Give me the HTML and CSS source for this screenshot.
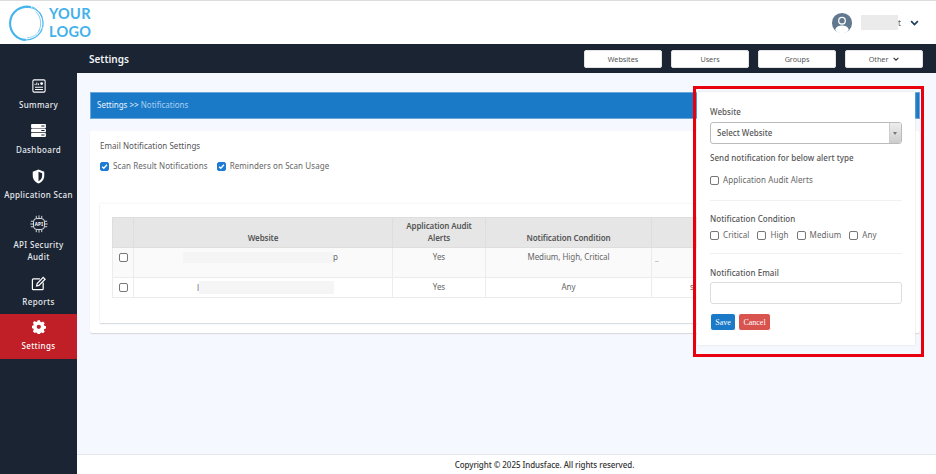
FILE: index.html
```html
<!DOCTYPE html>
<html lang="en">
<head>
<meta charset="utf-8">
<title>Settings - Notifications</title>
<link rel="stylesheet" href="styles.css">
</head>
<body>
<div class="app">
  <header class="topbar">
    <div class="logo">
      <svg class="logo-mark" viewBox="0 0 40 40" width="38" height="38" fill="none" stroke="#45b4ee">
        <path d="M24 3.100C14 .8 2.500 8 2.200 20c-.2 10 7.500 17.500 16.500 17.800" stroke-width="2.200"/>
        <path d="M12 5.500C20 1.500 32 3.500 36 14" stroke-width="1"/>
        <path d="M25 2.800C33 6 38.500 15 36.500 25" stroke-width="1"/>
        <path d="M29 8C35 13 36 23 32 29" stroke-width=".7"/>
        <path d="M33 8C37 14 38 22 35 28" stroke-width=".6"/>
        <path d="M17 37.800C25 38.500 33 34 36 26" stroke-width="1.200"/>
        <path d="M20 35.500C26 35.500 31 32 33.500 27" stroke-width=".6"/>
      </svg>
      <div class="logo-text">YOUR<br>LOGO</div>
    </div>
    <div class="user">
      <svg class="avatar" viewBox="0 0 24 24" width="22" height="22">
        <circle cx="12" cy="12" r="11" fill="#62788f"/>
        <circle cx="12" cy="9.500" r="4.300" fill="#fff"/>
        <circle cx="12" cy="9.500" r="2.900" fill="#62788f"/>
        <path d="M4.500 19.500C6 15.500 9 14.800 12 14.800S18 15.500 19.500 19.500C17.500 21.800 15 23 12 23S6.500 21.800 4.500 19.500Z" fill="#fff"/>
      </svg>
      <span class="user-name"><span class="user-blur"></span>t</span>
      <svg class="chev" viewBox="0 0 12 8" width="9" height="6"><path d="M1.500 1.500 6 6l4.500-4.500" fill="none" stroke="#1d3a57" stroke-width="2.200"/></svg>
    </div>
  </header>

  <aside class="sidebar">
    <a class="nav-item nav-summary">
      <svg viewBox="0 0 16 16" width="14" height="14" fill="none" stroke="#fff"><rect x="1" y="1" width="14" height="14" rx="1.500" stroke-width="1.200"/><path d="M3.500 7V5.500M5.500 7V4M7.500 7V5" stroke-width="1.100"/><circle cx="11" cy="5.200" r="1.600" fill="#fff" stroke="none"/><path d="M3.500 9.500h9M3.500 12h9" stroke-width="1.200"/></svg>
      <span>Summary</span>
    </a>
    <a class="nav-item nav-dash">
      <svg viewBox="0 0 16 14" width="15" height="13" fill="#fff"><path d="M1 0h14a1 1 0 0 1 1 1v2.500a1 1 0 0 1-1 1H1a1 1 0 0 1-1-1V1a1 1 0 0 1 1-1Zm0 5h14a1 1 0 0 1 1 1v2a1 1 0 0 1-1 1H1a1 1 0 0 1-1-1V6a1 1 0 0 1 1-1Zm0 4.700h14a1 1 0 0 1 1 1V13a1 1 0 0 1-1 1H1a1 1 0 0 1-1-1v-2.300a1 1 0 0 1 1-1Z"/><path d="M11 1.700h3.500v1H11ZM11 6.500h3.500v1H11ZM11 11.300h3.500v1H11Z" fill="#1a2433"/></svg>
      <span>Dashboard</span>
    </a>
    <a class="nav-item">
      <svg viewBox="0 0 14 16" width="13" height="15"><path d="M7 .5 13.200 3v4.200c0 4-2.600 7-6.200 8.300C3.400 14.200.8 11.200.8 7.200V3Z" fill="#fff"/><path d="M7 3v10c2.300-1.100 3.900-3.200 3.900-5.900V4.600Z" fill="#1a2433"/></svg>
      <span>Application Scan</span>
    </a>
    <a class="nav-item nav-api">
      <svg viewBox="0 0 22 22" width="20" height="20" fill="none" stroke="#fff" stroke-width=".9"><rect x="5" y="5" width="12" height="12" rx="3.500"/><path d="M8 5V2M11 5V1.500M14 5V2M8 17v3M11 17v3.500M14 17v3M5 8H2M5 11H1.500M5 14H2M17 8h3M17 11h3.500M17 14h3"/><text x="11" y="12.800" text-anchor="middle" class="api-text">API</text></svg>
      <span>API Security<br>Audit</span>
    </a>
    <a class="nav-item nav-reports">
      <svg viewBox="0 0 16 16" width="15" height="15" fill="none" stroke="#fff" stroke-width="1.300"><path d="M9.500 3H2.500A1 1 0 0 0 1.500 4v9.500a1 1 0 0 0 1 1H12a1 1 0 0 0 1-1V7"/><path d="M6 10.500 6.600 8 13 1.500l2 2L8.500 10Z"/></svg>
      <span>Reports</span>
    </a>
    <a class="nav-item nav-active">
      <svg viewBox="0 0 16 16" width="14" height="14"><path fill="#fff" fill-rule="evenodd" d="M6.600.5h2.800l.4 2 1.400.6 1.800-1.100 2 2-1.100 1.800.6 1.400 2 .4v2.800l-2 .4-.6 1.400 1.100 1.800-2 2-1.800-1.100-1.400.6-.4 2H6.600l-.4-2-1.400-.6L3 15.600l-2-2 1.100-1.800-.6-1.400-2-.4V7.200l2-.4.6-1.400L1 3.600l2-2 1.800 1.100 1.400-.6ZM8 5.800a2.500 2.500 0 1 0 0 5 2.500 2.500 0 0 0 0-5Z" transform="translate(0 -.3) scale(.97)"/></svg>
      <span>Settings</span>
    </a>
  </aside>

  <div class="subbar">
    <h1 class="page-title">Settings</h1>
    <div class="sub-actions">
      <button class="sub-btn">Websites</button>
      <button class="sub-btn">Users</button>
      <button class="sub-btn">Groups</button>
      <button class="sub-btn">Other <svg class="other-chev" viewBox="0 0 10 6" width="6" height="4"><path d="M1 1l4 4 4-4" fill="none" stroke="#333" stroke-width="1.800"/></svg></button>
    </div>
  </div>

  <main class="content">
    <div class="crumb">Settings &gt;&gt; <span class="crumb-current">Notifications</span></div>
    <section class="card">
      <div class="card-title">Email Notification Settings</div>
      <div class="opts">
        <label class="check"><input type="checkbox" class="cb cb-on" checked>Scan Result Notifications</label>
        <label class="check"><input type="checkbox" class="cb cb-on" checked>Reminders on Scan Usage</label>
      </div>
      <div class="inner">
        <table class="grid">
          <colgroup><col class="c1"><col class="c2"><col class="c3"><col class="c4"><col class="c5"></colgroup>
          <thead>
            <tr><th></th><th>Website</th><th>Application Audit Alerts</th><th>Notification Condition</th><th></th></tr>
          </thead>
          <tbody>
            <tr class="row-a">
              <td class="td-c"><input type="checkbox" class="cb"></td>
              <td><div class="site site-a"><span class="blur blur-a"></span>p</div></td>
              <td>Yes</td><td>Medium, High, Critical</td><td class="email-a">_</td>
            </tr>
            <tr class="row-b">
              <td class="td-c"><input type="checkbox" class="cb"></td>
              <td><div class="site site-b">l<span class="blur blur-b"></span></div></td>
              <td>Yes</td><td>Any</td><td class="email-b">s</td>
            </tr>
          </tbody>
        </table>
      </div>
    </section>
  </main>

  <footer class="footer">Copyright © 2025 Indusface. All rights reserved.</footer>

  <aside class="panel">
    <label class="fld-label">Website</label>
    <div class="select"><span>Select Website</span><span class="select-arrow"></span></div>
    <div class="fld-label fld-send">Send notification for below alert type</div>
    <label class="check check-audit"><input type="checkbox" class="cb">Application Audit Alerts</label>
    <hr class="sep">
    <div class="fld-label">Notification Condition</div>
    <div class="conds">
      <label class="check"><input type="checkbox" class="cb">Critical</label>
      <label class="check"><input type="checkbox" class="cb">High</label>
      <label class="check"><input type="checkbox" class="cb">Medium</label>
      <label class="check"><input type="checkbox" class="cb">Any</label>
    </div>
    <hr class="sep sep-2">
    <label class="fld-label">Notification Email</label>
    <input class="text-input" type="text">
    <div class="panel-actions">
      <button class="btn btn-save">Save</button>
      <button class="btn btn-cancel">Cancel</button>
    </div>
  </aside>
  <div class="highlight"></div>
</div>
</body>
</html>
```
FILE: styles.css
```css
* { box-sizing: border-box; }
html, body { margin: 0; height: 100%; overflow: hidden; }
body { font-family: "Noto Sans", "Open Sans", sans-serif; font-size: 8px; color: #555; background: #f5f8fe; }

.app {
  position: relative;
  width: 936px;
  height: 474px;
  display: grid;
  grid-template-columns: 77px minmax(0, 1fr);
  grid-template-rows: 44px 29px minmax(0, 1fr) 20px;
  overflow: hidden;
}

.topbar {
  grid-column: 1 / -1;
  display: flex;
  align-items: center;
  justify-content: space-between;
  background: #fff;
  border-top: 1px solid #dcdcdc;
  padding: 0 17px 0 8px;
}
.logo { display: flex; align-items: center; gap: 3px; }
.logo-mark { display: block; }
.logo-text { font-family: "Lato", sans-serif; font-size: 14.500px; font-weight: 700; line-height: 18px; letter-spacing: .3px; color: #43b1ea; }
.user { display: flex; align-items: center; }
.avatar { display: block; margin-right: 8px; }
.user-name { display: flex; align-items: center; width: 40px; font-size: 8px; color: #555; }
.user-blur { display: block; width: 38px; height: 15px; background: #ebebeb; }
.chev { display: block; margin-left: 9px; }

.sidebar {
  grid-column: 1;
  grid-row: 2 / 5;
  display: flex;
  flex-direction: column;
  background: #1a2433;
  padding-top: 35px;
  color: #eef0f3;
}
.nav-item {
  display: flex;
  flex-direction: column;
  align-items: center;
  flex: none;
  text-align: center;
  color: #e8eaee;
  font-size: 8px;
  font-weight: 500;
  letter-spacing: .35px;
  line-height: 12px;
  height: 45px;
  gap: 5px;
}
.nav-item svg { display: block; flex: none; }
.nav-summary { gap: 6px; }
.nav-dash { gap: 7px; }
.nav-api { height: 62px; }
.nav-reports { height: 38px; }
.nav-active { background: #c01f27; padding-top: 6px; color: #fff; gap: 6px; }

.subbar {
  grid-column: 2;
  grid-row: 2;
  display: flex;
  align-items: center;
  justify-content: space-between;
  background: #1a2433;
  padding: 0 13px 0 12px;
}
.page-title { margin: 0; font-size: 10px; font-weight: 600; color: #f1f3f5; }
.sub-actions { display: flex; gap: 9px; }
.sub-btn {
  width: 78px;
  height: 18px;
  padding: 0;
  border: 1px solid #e3e3e3;
  border-radius: 2px;
  background: #fff;
  color: #555;
  font: inherit;
  font-size: 7.200px;
}
.other-chev { margin-left: 3px; vertical-align: 1px; }

.content {
  grid-column: 2;
  grid-row: 3;
  padding: 19px 16px 0 13px;
  background: #f5f8fe;
  min-height: 0;
}
.crumb {
  height: 27px;
  background: #1a7ac8;
  border: 1px solid #6aa8dc;
  color: #eaf3fb;
  padding-left: 6px;
  line-height: 24px;
  font-size: 8px;
}
.crumb-current { color: #a9d0f0; }

.card {
  margin-top: 12px;
  height: 202px;
  background: #fff;
  border-radius: 2px;
  box-shadow: 0 1px 1px #d5d8dc;
  padding: 9px 10px 10px;
}
.card-title { font-size: 8px; letter-spacing: .05px; line-height: 12px; color: #555; }
.opts { display: flex; gap: 9px; margin-top: 8px; }
.check { display: inline-flex; align-items: center; gap: 4px; font-size: 8px; letter-spacing: .08px; line-height: 12px; color: #666; }
.cb {
  appearance: none;
  width: 9px;
  height: 9px;
  margin: 0;
  flex: none;
  border: 1px solid #777;
  border-radius: 2px;
  background: #fff;
}
.cb-on {
  border-color: #1d7bd6;
  background: #1d7bd6 url("data:image/svg+xml,%3Csvg xmlns='http://www.w3.org/2000/svg' viewBox='0 0 8 8'%3E%3Cpath d='M1.300 4.200 3.200 6 6.800 2' fill='none' stroke='%23fff' stroke-width='1.500'/%3E%3C/svg%3E") center / 100% no-repeat;
}

.inner {
  margin-top: 32px;
  height: 119px;
  background: #fff;
  box-shadow: 0 0 2px #e6e8eb, 0 1px 1px #d5d8dc;
  padding: 13px 12px 0;
}
.grid { width: 100%; table-layout: fixed; border-collapse: collapse; font-size: 8px; letter-spacing: -.05px; color: #666; text-align: center; }
.c1 { width: 21px; }
.c2 { width: 259px; }
.c3 { width: 93px; }
.c4 { width: 166px; }
.grid th {
  height: 30px;
  background: #e6e6e6;
  border: 1px solid #dedede;
  font-weight: 600;
  letter-spacing: -.1px;
  vertical-align: bottom;
  line-height: 12px;
  color: #555;
  padding: 0 6px 3px;
}
.grid td { border: 1px solid #ececec; padding: 0; vertical-align: top; line-height: 12px; }
.row-a td { height: 30px; background: #fafafa; padding-top: 3px; }
.row-b td { height: 20px; background: #fff; padding-top: 3px; }
.grid .td-c { padding-top: 5px; }
.grid .td-c .cb { display: block; margin: 0 auto; width: 9px; height: 9px; }
.site { display: flex; align-items: center; }
.site-a { padding-left: 49px; }
.site-b { padding-left: 63px; }
.blur { display: block; background: #f5f5f5; }
.blur-a { width: 150px; height: 11px; }
.blur-b { width: 135px; height: 13px; }
.grid .email-a { text-align: left; padding-left: 3px; color: #aaa; }
.grid .email-b { text-align: left; padding-left: 38px; }

.footer {
  grid-column: 2;
  grid-row: 4;
  display: flex;
  align-items: center;
  justify-content: center;
  padding-left: 76px;
  background: #fff;
  border-top: 1px solid #e4e7eb;
  font-size: 8px;
  letter-spacing: -.06px;
  font-weight: 500;
  color: #333;
}

.panel {
  position: absolute;
  left: 697px;
  top: 92px;
  width: 218px;
  height: 253px;
  display: flex;
  flex-direction: column;
  align-items: flex-start;
  background: #fff;
  box-shadow: 0 0 2px #d9dce0;
  padding: 14px 13px 0;
}
.fld-label { font-size: 8px; letter-spacing: .05px; line-height: 12px; font-weight: 500; color: #555; }
.select {
  display: flex;
  align-items: center;
  justify-content: space-between;
  flex: none;
  width: 192px;
  height: 22px;
  margin-top: 4px;
  padding-left: 6px;
  border: 1px solid #bbb;
  border-radius: 3px;
  font-size: 8px;
  font-weight: 500;
  color: #555;
  overflow: hidden;
}
.select > span:first-child { margin-top: -2px; }
.select-arrow {
  position: relative;
  width: 12px;
  height: 100%;
  background: linear-gradient(#eee, #ccc);
  border-left: 1px solid #ccc;
}
.select-arrow::after {
  content: "";
  position: absolute;
  left: 3px;
  top: 9px;
  border: 2.500px solid transparent;
  border-top: 3px solid #777;
  border-bottom: 0;
}
.fld-send { margin-top: 8px; }
.check-audit { margin-top: 10px; }
.sep { align-self: stretch; width: 192px; height: 1px; margin: 14px 0 0; border: 0; background: #f1f1f1; }
.panel > .sep + .fld-label { margin-top: 12px; }
.conds { display: flex; gap: 8px; margin-top: 4px; }
.sep-2 { margin-top: 12px; }
.panel > .sep-2 + .fld-label { margin-top: 13px; }
.text-input { width: 192px; height: 22px; margin-top: 3px; border: 1px solid #ddd; border-radius: 3px; background: #fff; }
.panel-actions { display: flex; gap: 2px; margin-top: 9px; }
.btn {
  height: 18px;
  padding: 0;
  border: 1px solid #fff;
  border-radius: 3px;
  color: #fff;
  font-family: "Liberation Serif", serif;
  font-size: 8px;
}
.btn-save { width: 26px; background: #1a7ac8; }
.btn-cancel { width: 33px; background: #d9534f; }

.highlight {
  position: absolute;
  left: 693px;
  top: 86px;
  width: 231px;
  height: 271px;
  border: 3px solid #e8000f;
  pointer-events: none;
}
.api-text { font-size: 5px; font-weight: 700; fill: #fff; stroke: none; }
```
